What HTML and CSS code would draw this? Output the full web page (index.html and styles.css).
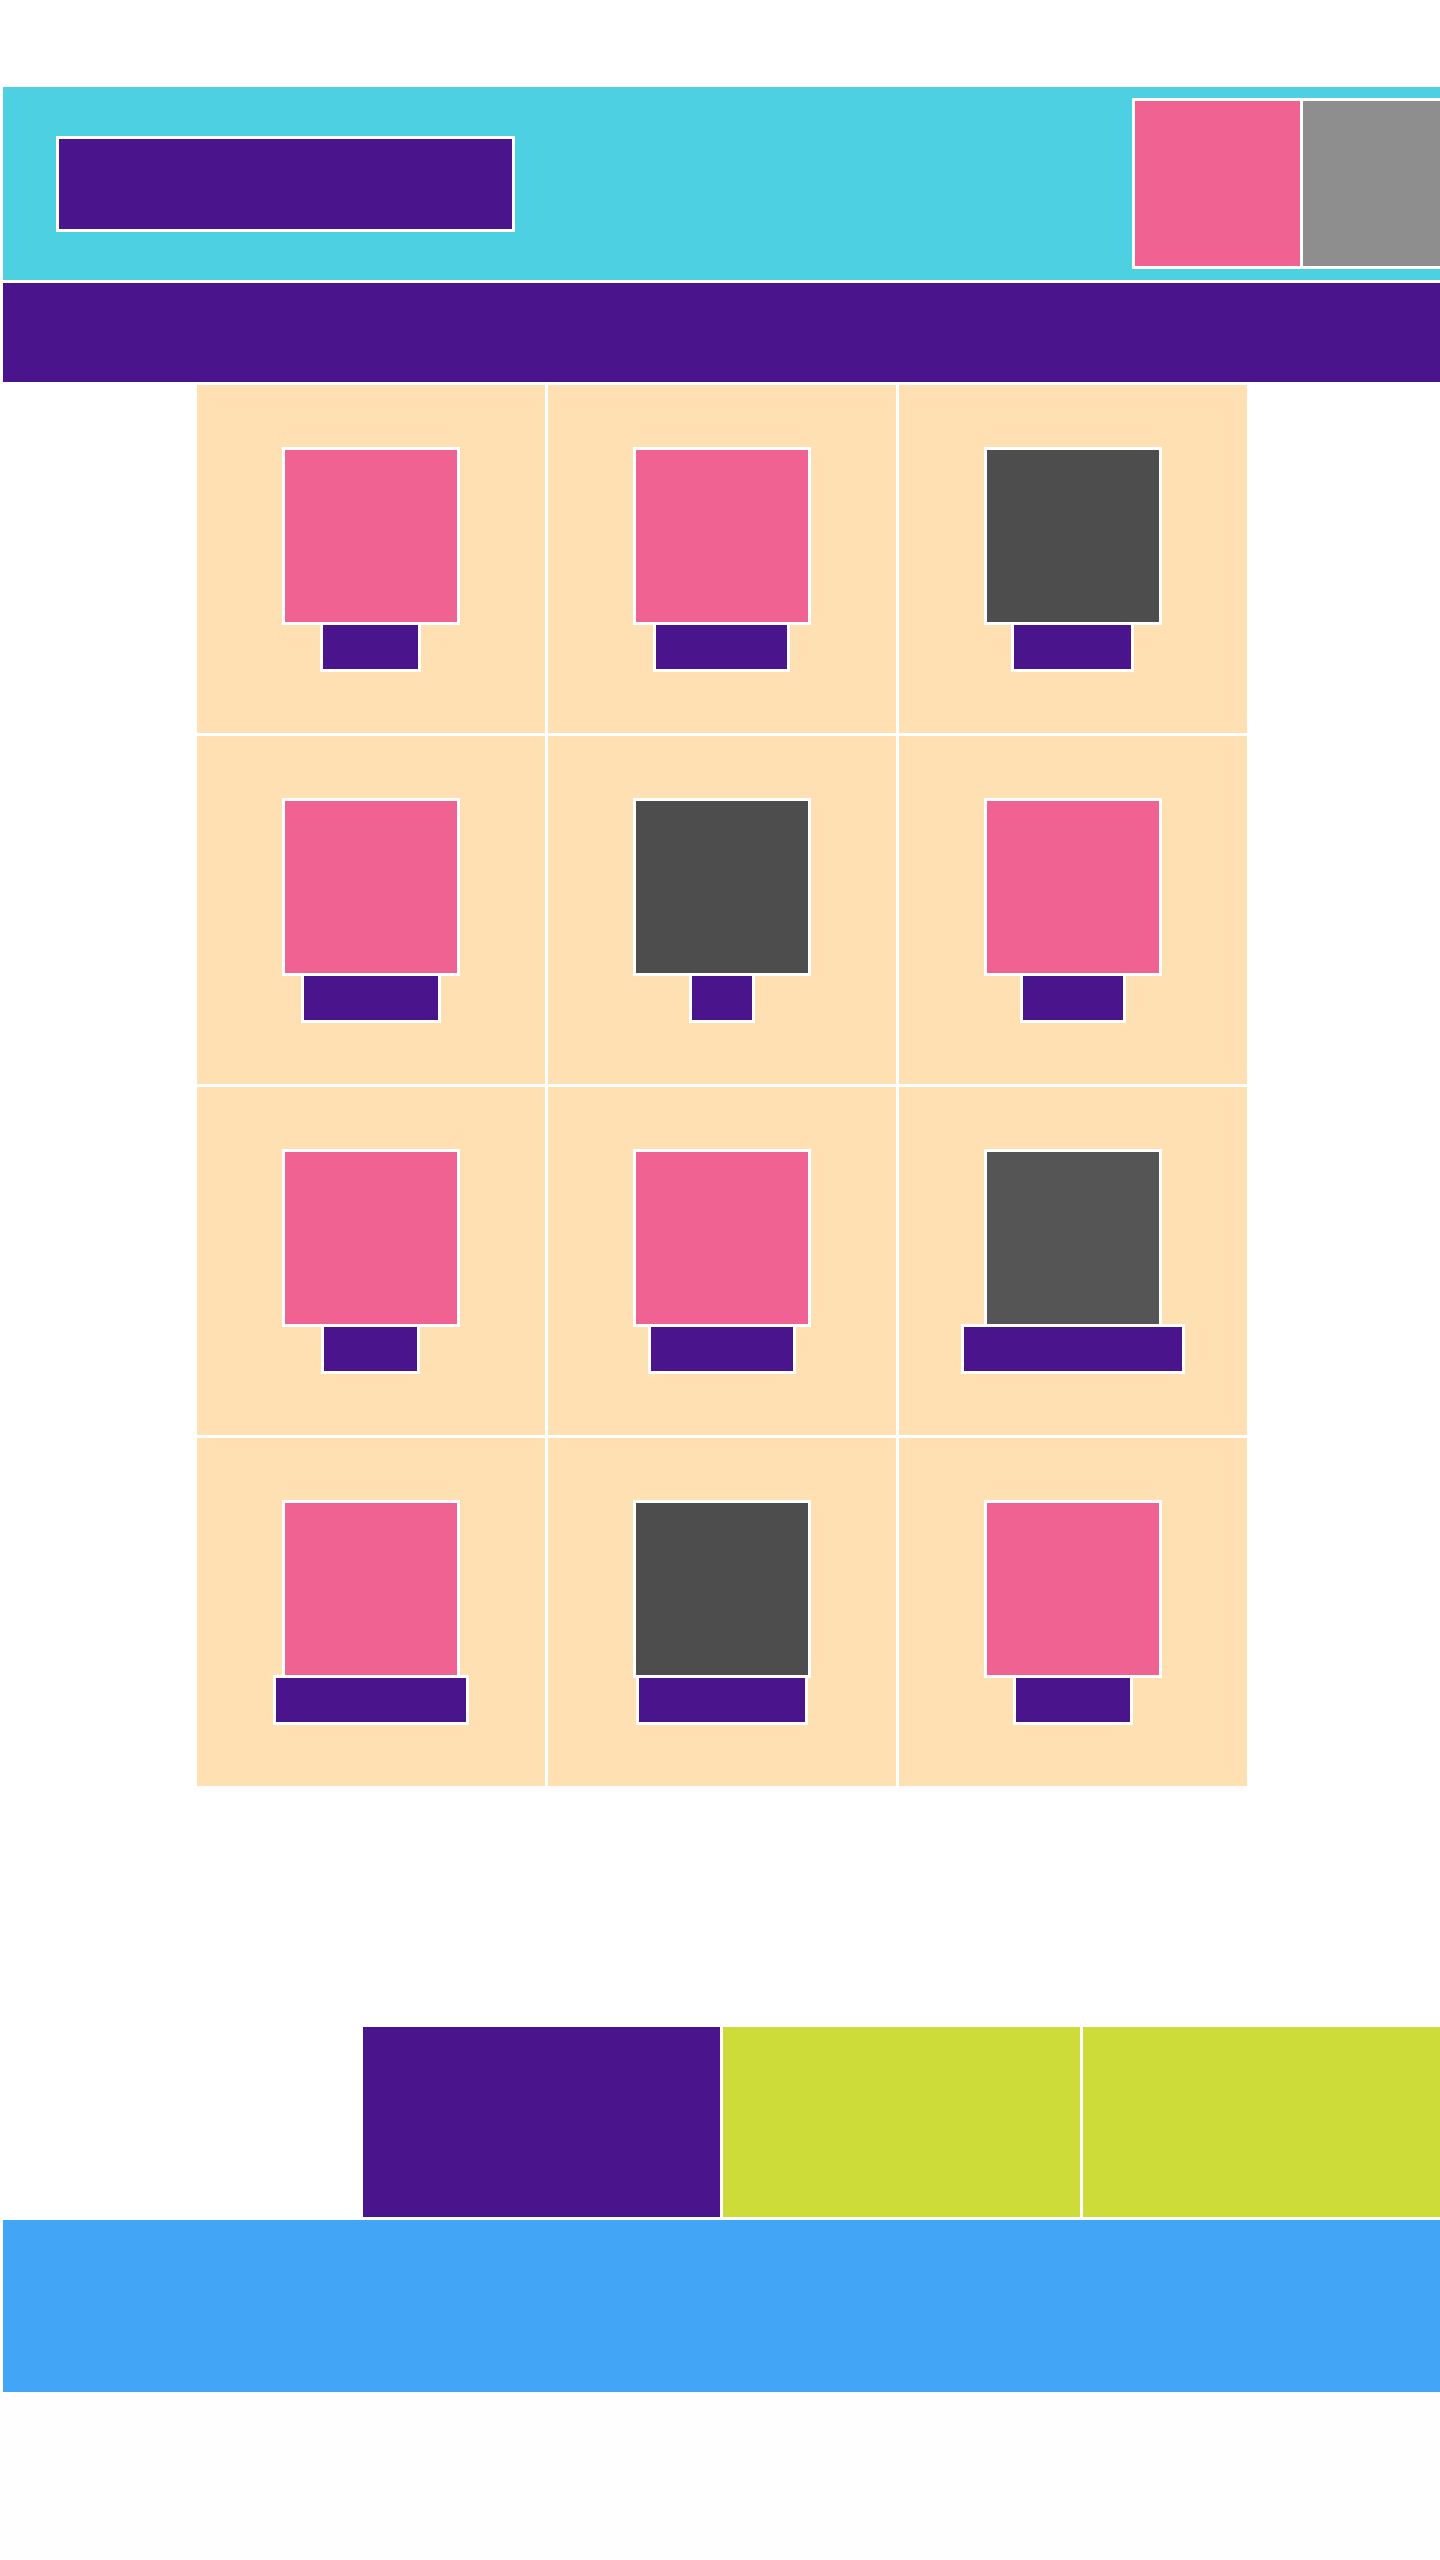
FILE: index.html
```html
<!DOCTYPE html>
<html lang="en">
<head>
<meta charset="utf-8">
<title>Gallery</title>
<link rel="stylesheet" href="styles.css">
</head>
<body>
<div class="page">
  <header class="header">
    <div class="logo"></div>
    <div class="header-media">
      <div class="media media-pink"></div>
      <div class="media media-grey"></div>
    </div>
  </header>
  <nav class="nav"></nav>
  <main class="grid">
    <div class="cell"><div class="thumb pink"></div><div class="label" style="width:101px"></div></div>
    <div class="cell"><div class="thumb pink"></div><div class="label" style="width:137px"></div></div>
    <div class="cell"><div class="thumb dark"></div><div class="label" style="width:123px"></div></div>
    <div class="cell"><div class="thumb pink"></div><div class="label" style="width:140px"></div></div>
    <div class="cell"><div class="thumb dark"></div><div class="label" style="width:66px"></div></div>
    <div class="cell"><div class="thumb pink"></div><div class="label" style="width:106px"></div></div>
    <div class="cell"><div class="thumb pink"></div><div class="label" style="width:99px"></div></div>
    <div class="cell"><div class="thumb pink"></div><div class="label" style="width:148px"></div></div>
    <div class="cell"><div class="thumb dark2"></div><div class="label" style="width:224px"></div></div>
    <div class="cell"><div class="thumb pink"></div><div class="label" style="width:196px"></div></div>
    <div class="cell"><div class="thumb dark"></div><div class="label" style="width:172px"></div></div>
    <div class="cell"><div class="thumb pink"></div><div class="label" style="width:120px"></div></div>
  </main>
  <section class="strip">
    <div class="tile tile-purple"></div>
    <div class="tile tile-lime"></div>
    <div class="tile tile-lime"></div>
  </section>
  <footer class="footer"></footer>
</div>
</body>
</html>
```

FILE: styles.css
```css
html {
  background: #fefefe;
  overflow-x: hidden;
}

body {
  margin: 0;
  background: #ffffff;
  font-family: "Liberation Sans", Arial, sans-serif;
}

.page {
  display: flex;
  flex-direction: column;
  gap: 3px;
  padding: 87px 0 0 3px;
}

.header {
  height: 193px;
  background: #4dd0e1;
  display: flex;
  align-items: center;
  padding-left: 53px;
  overflow: hidden;
}

.logo {
  box-sizing: border-box;
  width: 459px;
  height: 96px;
  background: #4a148c;
  border: 3px solid #ffffff;
  flex: none;
}

.header-media {
  margin-left: auto;
  margin-right: -31px;
  display: flex;
  gap: 3px;
  padding: 3px;
  background: #ffffff;
  flex: none;
}

.media {
  width: 165px;
  height: 165px;
}

.media-pink { background: #f06292; }
.media-grey { background: #8e8e8e; }

.nav {
  height: 99px;
  background: #4a148c;
}

.grid {
  display: grid;
  grid-template-columns: repeat(3, 348px);
  grid-auto-rows: 348px;
  gap: 3px;
  justify-content: center;
}

.cell {
  background: #ffe0b2;
  display: flex;
  flex-direction: column;
  align-items: center;
  justify-content: center;
}

.thumb {
  box-sizing: border-box;
  width: 178px;
  height: 178px;
  border: 3px solid #ffffff;
}

.thumb.pink { background: #f06292; }
.thumb.dark { background: #4d4d4d; }
.thumb.dark2 { background: #555555; }

.label {
  box-sizing: border-box;
  height: 50px;
  margin-top: -3px;
  background: #4a148c;
  border: 3px solid #ffffff;
}

.strip {
  margin-top: 238px;
  height: 190px;
  display: flex;
  justify-content: flex-end;
  gap: 3px;
}

.tile {
  width: 357px;
}

.tile-purple { background: #4a148c; }
.tile-lime { background: #cddc39; }

.footer {
  height: 172px;
  background: #42a5f5;
}
```
